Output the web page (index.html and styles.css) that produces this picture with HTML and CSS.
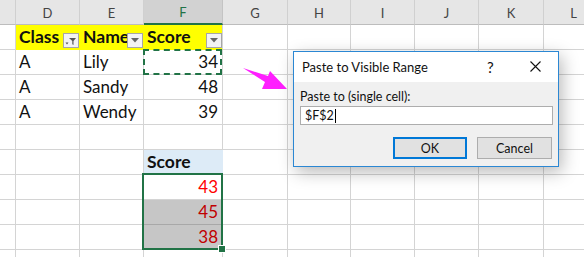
FILE: index.html
```html
<!DOCTYPE html>
<html lang="en">
<head>
    <meta charset="UTF-8">
    <title>Paste to Visible Range</title>
    <link rel="stylesheet" href="styles.css">
</head>
<body>
    <div class="sheet">
        <div class="grid">
            <!-- column headers -->
            <div class="ch"></div>
            <div class="ch">D</div>
            <div class="ch">E</div>
            <div class="ch ch-active">F</div>
            <div class="ch">G</div>
            <div class="ch">H</div>
            <div class="ch">I</div>
            <div class="ch">J</div>
            <div class="ch">K</div>
            <div class="ch">L</div>

            <!-- row 1 -->
            <div class="c"></div>
            <div class="c hd">Class<span class="flt flt-on"><svg width="12" height="10" viewBox="0 0 12 10"><path d="M4 2h7L8.5 5v4l-1.2-0.8V5z" fill="#555"/><path d="M0.5 6.5h3l-1.5 2z" fill="#555"/></svg></span></div>
            <div class="c hd">Name<span class="flt"><svg width="8" height="5" viewBox="0 0 8 5"><path d="M0 0h8L4 4.5z" fill="#666"/></svg></span></div>
            <div class="c hd hd-last">Score<span class="flt"><svg width="8" height="5" viewBox="0 0 8 5"><path d="M0 0h8L4 4.5z" fill="#666"/></svg></span></div>
            <div class="c"></div><div class="c"></div><div class="c"></div><div class="c"></div><div class="c"></div><div class="c"></div>

            <!-- row 2 -->
            <div class="c"></div>
            <div class="c">A</div>
            <div class="c">Lily</div>
            <div class="c num copy">34</div>
            <div class="c"></div><div class="c"></div><div class="c"></div><div class="c"></div><div class="c"></div><div class="c"></div>

            <!-- row 3 -->
            <div class="c"></div>
            <div class="c">A</div>
            <div class="c">Sandy</div>
            <div class="c num">48</div>
            <div class="c"></div><div class="c"></div><div class="c"></div><div class="c"></div><div class="c"></div><div class="c"></div>

            <!-- row 4 -->
            <div class="c"></div>
            <div class="c">A</div>
            <div class="c">Wendy</div>
            <div class="c num">39</div>
            <div class="c"></div><div class="c"></div><div class="c"></div><div class="c"></div><div class="c"></div><div class="c"></div>

            <!-- row 5 -->
            <div class="c"></div><div class="c"></div><div class="c"></div><div class="c"></div><div class="c"></div>
            <div class="c"></div><div class="c"></div><div class="c"></div><div class="c"></div><div class="c"></div>

            <!-- row 6 -->
            <div class="c"></div><div class="c"></div><div class="c"></div>
            <div class="c hd2">Score</div>
            <div class="c"></div><div class="c"></div><div class="c"></div><div class="c"></div><div class="c"></div><div class="c"></div>

            <!-- row 7 -->
            <div class="c"></div><div class="c"></div><div class="c"></div>
            <div class="c num red">43</div>
            <div class="c"></div><div class="c"></div><div class="c"></div><div class="c"></div><div class="c"></div><div class="c"></div>

            <!-- row 8 -->
            <div class="c"></div><div class="c"></div><div class="c"></div>
            <div class="c num red hidden-row">45</div>
            <div class="c"></div><div class="c"></div><div class="c"></div><div class="c"></div><div class="c"></div><div class="c"></div>

            <!-- row 9 -->
            <div class="c"></div><div class="c"></div><div class="c"></div>
            <div class="c num red hidden-row">38</div>
            <div class="c"></div><div class="c"></div><div class="c"></div><div class="c"></div><div class="c"></div><div class="c"></div>

            <!-- row 10 -->
            <div class="c"></div><div class="c"></div><div class="c"></div><div class="c"></div><div class="c"></div>
            <div class="c"></div><div class="c"></div><div class="c"></div><div class="c"></div><div class="c"></div>

            <div class="sel"><span class="handle"></span></div>
        </div>

        <svg class="arrow" width="60" height="40" viewBox="0 0 60 40">
            <path d="M3 8 L28 16 L30 11 L47 29 L22 29 L25 22 Z" fill="#ff1fff"/>
        </svg>

        <div class="dialog">
            <div class="dlg-title">
                <span>Paste to Visible Range</span>
                <span class="dlg-help">?</span>
                <svg class="dlg-close" width="11" height="11" viewBox="0 0 11 11"><path d="M0.5 0.5L10.5 10.5M10.5 0.5L0.5 10.5" stroke="#111" stroke-width="1.1"/></svg>
            </div>
            <div class="dlg-body">
                <div class="dlg-label">Paste to (single cell):</div>
                <div class="dlg-input">$F$2<span class="caret"></span></div>
                <div class="dlg-buttons">
                    <button class="btn btn-default">OK</button>
                    <button class="btn">Cancel</button>
                </div>
            </div>
        </div>
    </div>
</body>
</html>
```

FILE: styles.css
```css
body {
    margin: 0;
    background: #fff;
    font-family: Lato, 'Liberation Sans', Arial, sans-serif;
    overflow: hidden;
}
.sheet {
    position: relative;
    width: 584px;
    height: 257px;
    overflow: hidden;
}
.grid {
    position: relative;
    display: grid;
    grid-template-columns: 16px 64px 64px 79px 65px 63px 64px 64px 65px 60px;
    grid-template-rows: repeat(11, 25px);
}
.ch {
    box-sizing: border-box;
    background: #e6e6e6;
    border-right: 1px solid #d0d0d0;
    border-bottom: 1px solid #bdbdbd;
    color: #444;
    font-size: 13px;
    display: flex;
    align-items: center;
    justify-content: center;
    padding-top: 1px;
}
.ch-active {
    background: #d2d2d2;
    color: #217346;
    border-bottom: 2px solid #217346;
    border-right-color: #c4c4c4;
}
.c {
    position: relative;
    box-sizing: border-box;
    border-right: 1px solid #d4d4d4;
    border-bottom: 1px solid #d4d4d4;
    font-size: 17px;
    color: #111;
    display: flex;
    align-items: flex-end;
    padding: 0 3px 2px 3px;
    white-space: nowrap;
}
.hd {
    background: #ffff00;
    font-weight: bold;
    font-size: 17.5px;
    border-right-color: #ffff00;
    border-bottom-color: #ffff00;
    overflow: hidden;
}
.hd-last {
    border-right-color: #d4d4d4;
}
.flt {
    position: absolute;
    right: 0;
    top: 8px;
    width: 16px;
    height: 15px;
    box-sizing: border-box;
    border: 1px solid #a6a6a6;
    background: #f3f3f3;
    display: flex;
    align-items: center;
    justify-content: center;
}
.flt-on svg {
    margin-top: 1px;
}
.num {
    justify-content: flex-end;
    padding-right: 4px;
}
.copy::after {
    content: "";
    position: absolute;
    left: -1px;
    top: -1px;
    right: 0;
    bottom: -1px;
    border: 2px dashed #217346;
}
.hd2 {
    background: #ddebf7;
    font-weight: bold;
    font-size: 17.5px;
    border-right-color: #ddebf7;
}
.red {
    color: #ff0000;
}
.hidden-row {
    background: #c6c6c6;
    color: #c00000;
    border-bottom-color: #a8a8a8;
}
.sel {
    position: absolute;
    left: 142px;
    top: 173px;
    width: 81px;
    height: 77px;
    box-sizing: border-box;
    border: 2px solid #217346;
    pointer-events: none;
}
.handle {
    position: absolute;
    right: -5px;
    bottom: -5px;
    width: 6px;
    height: 6px;
    background: #217346;
    border: 1px solid #fff;
}
.arrow {
    position: absolute;
    left: 240px;
    top: 60px;
}
.dialog {
    position: absolute;
    left: 293px;
    top: 51px;
    width: 266px;
    height: 116px;
    box-sizing: border-box;
    border: 1px solid #2b87d3;
    background: #f0f0f0;
    box-shadow: 3px 5px 16px rgba(0, 0, 0, 0.28);
    font-family: Lato, 'Liberation Sans', Arial, sans-serif;
    font-size: 12.5px;
    color: #111;
}
.dlg-title {
    height: 30px;
    background: #fff;
    display: flex;
    align-items: center;
    padding: 0 0 0 8px;
    font-size: 13px;
    position: relative;
}
.dlg-help {
    position: absolute;
    left: 193px;
    top: 6px;
    font-size: 15px;
}
.dlg-close {
    position: absolute;
    left: 236px;
    top: 9px;
}
.dlg-body {
    padding: 7px 5px 0 6px;
}
.dlg-label {
    line-height: 15px;
}
.dlg-input {
    margin-top: 2px;
    height: 19px;
    width: 253px;
    box-sizing: border-box;
    border: 1px solid #adadad;
    background: #fff;
    padding: 0 4px;
    line-height: 17px;
    display: flex;
    align-items: center;
}
.caret {
    display: inline-block;
    width: 1px;
    height: 14px;
    background: #000;
    margin-left: 1px;
}
.dlg-buttons {
    display: flex;
    justify-content: flex-end;
    gap: 10px;
    margin-top: 12px;
    width: 252px;
}
.btn {
    width: 75px;
    height: 22px;
    box-sizing: border-box;
    border: 1px solid #adadad;
    background: #e1e1e1;
    font-family: Lato, 'Liberation Sans', Arial, sans-serif;
    font-size: 12.5px;
    color: #111;
    padding: 0;
}
.btn-default {
    width: 74px;
    border: 2px solid #0078d7;
}
```
